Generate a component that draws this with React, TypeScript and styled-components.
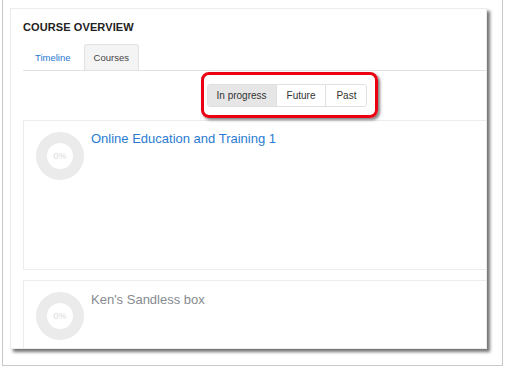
import React from "react";
import styled, { createGlobalStyle } from "styled-components";

const GlobalStyle = createGlobalStyle`
  html, body {
    margin: 0;
    padding: 0;
    background: #ffffff;
    font-family: "Liberation Sans", Arial, sans-serif;
  }
`;

const Frame = styled.div`
  position: relative;
  margin-left: 2px;
  width: 501px;
  height: 366px;
  border: 1px solid #c9c9c9;
  border-top: none;
  box-sizing: border-box;
  padding: 8px 0 0 7px;
`;

const Panel = styled.div`
  position: relative;
  width: 477px;
  height: 341px;
  box-sizing: border-box;
  background: #fff;
  border: 1px solid #ececec;
  box-shadow: 3px 3px 3px rgba(0, 0, 0, 0.55);
  overflow: hidden;
  padding: 12px 0 0 12px;
`;

const Content = styled.div`
  width: 528px;
`;

const Heading = styled.h2`
  margin: 0;
  font-size: 11px;
  line-height: 13px;
  font-weight: bold;
  color: #222;
  letter-spacing: 0.1px;
`;

const Tabs = styled.div`
  display: flex;
  margin-top: 10px;
  height: 26px;
  border-bottom: 1px solid #e2e2e2;
`;

const Tab = styled.div<{ $active?: boolean }>`
  display: flex;
  align-items: center;
  padding: 0 ${(p) => (p.$active ? 9 : 11)}px;
  margin-right: 1px;
  font-size: 9.5px;
  color: ${(p) => (p.$active ? "#444" : "#1f78d1")};
  background: ${(p) => (p.$active ? "#f4f4f4" : "transparent")};
  border: 1px solid ${(p) => (p.$active ? "#e2e2e2" : "transparent")};
  border-bottom: none;
  border-radius: 3px 3px 0 0;
`;

const FilterRow = styled.div`
  display: flex;
  justify-content: center;
  padding: 13px 0 13px;
  border-bottom: 1px solid #ececec;
`;

const ButtonGroup = styled.div`
  display: flex;
  height: 23px;
  border: 1px solid #e0e0e0;
  border-radius: 3px;
  box-sizing: border-box;
  overflow: hidden;
`;

const FilterButton = styled.div<{ $active?: boolean }>`
  display: flex;
  align-items: center;
  padding: 0 ${(p) => (p.$active ? 9 : 10)}px;
  font-size: 10px;
  color: #333;
  background: ${(p) => (p.$active ? "#e6e6e6" : "#fff")};
  border-left: 1px solid #e0e0e0;
  &:first-child {
    border-left: none;
  }
`;

const Highlight = styled.div`
  position: absolute;
  left: 190px;
  top: 63px;
  width: 177px;
  height: 46px;
  box-sizing: border-box;
  border: 3px solid #ea0012;
  border-radius: 8px;
  box-shadow: 2px 2px 3px rgba(0, 0, 0, 0.5);
  pointer-events: none;
`;

const CourseList = styled.div`
  display: flex;
  flex-direction: column;
  gap: 10px;
`;

const Card = styled.div<{ $height: number }>`
  display: flex;
  align-items: flex-start;
  gap: 7px;
  height: ${(p) => p.$height}px;
  box-sizing: border-box;
  padding: 11px 12px;
  border: 1px solid #ececec;
  border-top: none;
  &:not(:first-child) {
    border-top: 1px solid #ececec;
  }
`;

const CourseTitle = styled.div<{ $muted?: boolean }>`
  margin-top: ${(p) => (p.$muted ? 0 : -1)}px;
  font-size: 13px;
  line-height: 16px;
  color: ${(p) => (p.$muted ? "#868b90" : "#2a7bd3")};
`;

const Progress = ({ value }: { value: number }) => (
  <svg width="48" height="48" viewBox="0 0 48 48">
    <circle cx="24" cy="24" r="18.5" fill="none" stroke="#ebebeb" strokeWidth="11" />
    <text
      x="24"
      y="27"
      textAnchor="middle"
      fontSize="9"
      fill="#dcdcdc"
      fontFamily="Liberation Sans, Arial, sans-serif"
    >
      {value}%
    </text>
  </svg>
);

const courses = [
  { name: "Online Education and Training 1", height: 149, muted: false },
  { name: "Ken's Sandless box", height: 80, muted: true },
];

export default function App() {
  return (
    <>
      <GlobalStyle />
      <Frame>
        <Panel>
          <Content>
            <Heading>COURSE OVERVIEW</Heading>
            <Tabs>
              <Tab>Timeline</Tab>
              <Tab $active>Courses</Tab>
            </Tabs>
            <FilterRow>
              <ButtonGroup>
                <FilterButton $active>In progress</FilterButton>
                <FilterButton>Future</FilterButton>
                <FilterButton>Past</FilterButton>
              </ButtonGroup>
            </FilterRow>
            <CourseList>
              {courses.map((c) => (
                <Card key={c.name} $height={c.height}>
                  <Progress value={0} />
                  <CourseTitle $muted={c.muted}>{c.name}</CourseTitle>
                </Card>
              ))}
            </CourseList>
          </Content>
          <Highlight />
        </Panel>
      </Frame>
    </>
  );
}
